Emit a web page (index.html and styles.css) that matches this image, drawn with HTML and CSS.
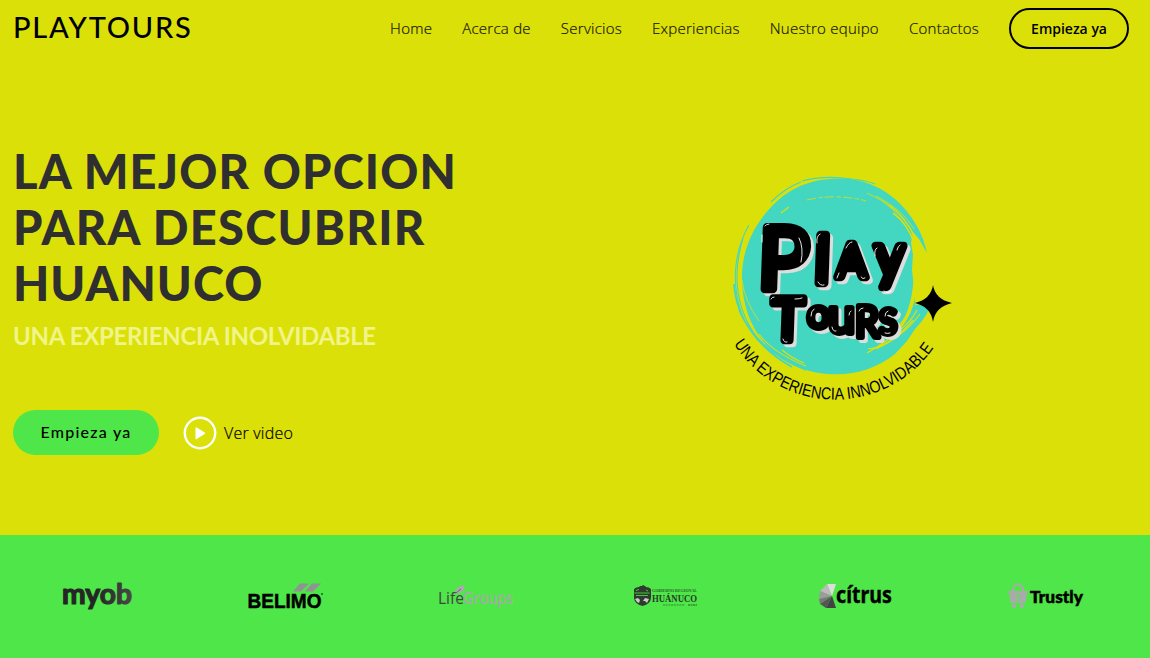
FILE: index.html
```html
<!DOCTYPE html>
<html lang="es">
<head>
<meta charset="utf-8">
<title>PLAYTOURS</title>
<link rel="stylesheet" href="styles.css">
</head>
<body>
<div class="hero">
  <header class="header">
    <a class="brand">PLAYTOURS</a>
    <nav class="nav">
      <a>Home</a><a>Acerca de</a><a>Servicios</a><a>Experiencias</a><a>Nuestro equipo</a><a>Contactos</a>
      <a class="cta">Empieza ya</a>
    </nav>
  </header>
  <main class="main">
    <section class="copy">
      <h1><span class="l1">LA MEJOR OPCION</span><span class="l2">PARA DESCUBRIR</span><span class="l3">HUANUCO</span></h1>
      <h2>UNA EXPERIENCIA INOLVIDABLE</h2>
      <div class="actions">
        <a class="start">Empieza ya</a>
        <a class="video">
          <svg width="34" height="34" viewBox="0 0 34 34"><circle cx="17" cy="17" r="15.2" fill="none" stroke="#fff" stroke-width="2.4"/><path d="M12.500 12v10.400q0 1.300 1.200.6l8-5q1-.8 0-1.500l-8-5q-1.200-.7-1.200.5z" fill="#fff"/></svg>
          <span>Ver video</span>
        </a>
      </div>
    </section>
    <svg class="art" width="240" height="245" viewBox="0 0 240 245">
      <defs>
        <path id="arc" d="M9 178A119.500 119.500 0 0 0 211 178"/>
      </defs>
      <path fill="#43d7c2" d="M17 115C16 82 32 52 58 31C78 17 98 12 125 14C145 17 158 24 170 34C187 49 198 68 202 88L194 74L188 67L186 78L188 89L187 105L189 123L190 140L199 139L205 132L207 136C204 146 199 155 190 164L182 176L170 189C151 204 128 211 103 209C52 205 18 167 17 115Z"/>
      <g fill="none" stroke="#43d7c2">
        <path d="M24 60C8 88 7 120 16 147M18 73C7 110 11 145 33 174" stroke-width="1.100"/>
        <path d="M9 119C11 153 34 184 67 202M14 145C27 175 51 193 81 205" stroke-width="1.700"/>
        <path d="M77 16Q95 11 118 13T150 19M46 37Q60 23 76 17" stroke-width="1.200"/>
      </g>
      <g fill="none" stroke="#dce009">
        <path d="M82 35Q98 31 115 32T141 36" stroke-width=".8" stroke-dasharray="9 3 4 2"/>
        <path d="M142 28Q171 39 187 72M156 35Q179 46 194 80M151 31Q177 44 189 64" stroke-width=".8"/>
        <path d="M164 40Q181 52 191 75M168 48Q183 59 190 80" stroke-width="1.500"/>
        <path d="M188 86Q193 105 190 123Q190 149 169 170M192 145Q183 164 142 188M195 149Q178 172 151 184M188 155Q165 182 143 184" stroke-width="1.200"/>
        <path d="M190 116Q187 151 173 163" stroke-width="3"/>
        <path d="M34 169Q48 188 81 201M57 185Q68 194 79 198M26 58Q18 78 17 91M56 48l8-6" stroke-width="1.100"/>
        <path d="M17 115Q19 135 34 156" stroke-width=".8"/>
      </g>
      <g class="lettering">
        <text transform="translate(32 124) skewX(-2)" font-size="86" textLength="51" lengthAdjust="spacingAndGlyphs">P</text>
        <text transform="translate(89 118) skewX(-2)" font-size="65" textLength="15" lengthAdjust="spacingAndGlyphs">l</text>
        <text x="112" y="112" font-size="46" textLength="29" lengthAdjust="spacingAndGlyphs">A</text>
        <text x="150" y="112" font-size="60" textLength="29" lengthAdjust="spacingAndGlyphs">y</text>
        <text transform="translate(46 175) skewX(-2)" font-size="58" textLength="32" lengthAdjust="spacingAndGlyphs">T</text>
        <g class="small"><text x="82" y="163" font-size="41" textLength="23" lengthAdjust="spacingAndGlyphs">o</text>
        <text x="103" y="168" font-size="48" textLength="27" lengthAdjust="spacingAndGlyphs">u</text>
        <text x="130" y="172" font-size="43" textLength="24" lengthAdjust="spacingAndGlyphs">R</text>
        <text x="154" y="169" font-size="34" textLength="18" lengthAdjust="spacingAndGlyphs">S</text></g>
      </g>
      <path class="shine" d="M37 77V70M40 61Q41 59 44 59M74 73Q79 83 76 97M92 78Q91 71 95 69M93 117Q95 121 99 120M121 83Q124 77 127 77M112 113l2-5M136 112q2 3 4 1M150 91Q149 84 152 83M172 85q1-4 3-5M159 126q3 3 7 0M46 134q1-2 3-2M70 134q5 0 7-1M58 174q1 4 4 3M86 151q0-5 3-7M107 162q1 5 4 4M124 150q0-3 2-4M134 146q1-3 4-3M160 151q0-4 3-5M160 168q3 1 5 0"/>
      <path d="M208 120Q210 134 227 138Q210 142 208 157Q206 142 190 138Q206 134 208 120Z"/>
      <text class="arc-text" transform="translate(0 1)"><textPath href="#arc" textLength="236" lengthAdjust="spacingAndGlyphs">UNA EXPERIENCIA INNOLVIDABLE</textPath></text>
    </svg>
  </main>
</div>
<footer class="partners">
  <svg width="90" height="40" viewBox="0 0 90 40">
    <defs><linearGradient id="fade"><stop offset=".5" stop-color="#252525"/><stop offset="1" stop-color="#484848"/></linearGradient></defs>
    <text x="10" y="28" class="myob" textLength="70" lengthAdjust="spacingAndGlyphs">myob</text>
  </svg>
  <svg width="90" height="40" viewBox="0 0 90 40">
    <path d="M58 7.500h9l-8 8h-8zM70 7.500h9l-8 8h-8z" fill="#929292"/>
    <text x="5.500" y="31.500" class="belimo" textLength="74" lengthAdjust="spacingAndGlyphs">BELIMO</text><circle cx="80" cy="18" r=".8"/>
  </svg>
  <svg width="90" height="40" viewBox="0 0 90 40">
    <path d="M23 17q0-7 10-8-1 8-7 8.500z" fill="#aaa"/><path d="M24 17l5-4" stroke="#555" stroke-width=".8"/>
    <text x="6" y="28" class="life" textLength="26" lengthAdjust="spacingAndGlyphs">Life</text><text x="31" y="28" class="life groups" textLength="50" lengthAdjust="spacingAndGlyphs">Groups</text>
  </svg>
  <svg width="90" height="40" viewBox="0 0 90 40">
    <path d="M12 13q2-2 5-2l1-1h2l1-1 2 1 1 1q3 0 5 2v9q-.5 6-8.500 8-8-2-8.500-8z" fill="#303b30"/>
    <path d="M12.500 17h15M14 19.500h12M14 14.500l3-1M24 14l2 1" stroke="#4ee648" stroke-width=".8"/>
    <path d="M13 23l3-1 2 2-1 3-2-1zM21 25l2-3 4 1-2 4-2-2z" fill="#c8ccc8"/>
    <text x="30" y="15.500" class="gob" textLength="45" lengthAdjust="spacingAndGlyphs">GOBIERNO REGIONAL</text>
    <text x="30" y="26" class="huanuco" textLength="45" lengthAdjust="spacingAndGlyphs">HUÁNUCO</text>
    <path d="M41 29h22" stroke="#2f8f2c" stroke-width="1" stroke-dasharray="2 .7"/><path d="M66 29h9" stroke="#285c27" stroke-width="1.200" stroke-dasharray="2 .5"/>
  </svg>
  <svg width="90" height="40" viewBox="0 0 90 40">
    <path d="M15 8h9l-4 12z" fill="#ddd"/><path d="M15 8l5 12-12-5z" fill="#bbb"/><path d="M8 15l12 5-13 3z" fill="#9b9b9b"/><path d="M7 23l13-3-12 8z" fill="#777"/><path d="M8 28l12-8-6 12z" fill="#555"/><path d="M14 32l6-12 4 12z" fill="#424242"/>
    <text x="24" y="26.500" class="citrus" textLength="56" lengthAdjust="spacingAndGlyphs">cítrus</text>
  </svg>
  <svg width="90" height="40" viewBox="0 0 90 40">
    <path d="M11 16v-3q1-4.500 5-4.500t5 4.500v3" fill="none" stroke="#aaa" stroke-width="2"/>
    <path d="M6 15h20l-1 3-1.500 8q0 1-1 1h-13q-1 0-1-1L7 18z" fill="#aaa"/><circle cx="12" cy="30" r="2.200" fill="#aaa"/><circle cx="20" cy="30" r="2.200" fill="#aaa"/>
    <text x="13.200" y="25" class="tee">T</text>
    <text x="28" y="27" class="trustly" textLength="53" lengthAdjust="spacingAndGlyphs">Trustly</text>
  </svg>
</footer>
</body>
</html>
```
FILE: styles.css
```css
body{margin:0;background:#4ee648;font-family:"Open Sans",sans-serif;color:#000}
.hero{height:535px;background:#dce009}
.header{display:flex;justify-content:space-between;height:57px}
.brand{font:500 29px/53px Lato,sans-serif;letter-spacing:1.8px;padding-left:13px}
.nav{display:flex;gap:30px;align-items:center;padding-right:21px;font-size:15px;font-weight:300;color:#151600;letter-spacing:.255px;-webkit-text-stroke:.2px #151600}
.nav a{padding-bottom:2px}
.nav .cta{border:2px solid #000;border-radius:21px;padding:0 20px;line-height:37px;font-size:14px;font-weight:600;color:#000;letter-spacing:0;-webkit-text-stroke:0}
.main{display:flex;justify-content:space-between;padding:0 185px 0 13px}
.copy{padding-top:86px}
h1{margin:0;font:900 47px/56px Lato,sans-serif;color:#2f2f2f}
h1 span{display:block}
.l1{letter-spacing:1.2px}
.l2{letter-spacing:1.3px}
.l3{letter-spacing:1px}
h2{margin:10px 0 0;font:700 24px/29px Lato,sans-serif;color:#f1f486;letter-spacing:-.33px}
.actions{display:flex;gap:24px;align-items:center;margin-top:60px}
.start{box-sizing:border-box;width:146px;height:45px;border-radius:23px;background:#4ee648;text-align:center;font:500 16px/43px Lato,sans-serif;letter-spacing:1.25px}
.video{display:flex;align-items:center;gap:7px;font-size:16px;font-weight:300;letter-spacing:.22px;-webkit-text-stroke:.2px #000}
.art{margin-top:108px}
.lettering{font-family:Lato,sans-serif;font-weight:400;fill:#000;stroke:#000;stroke-width:8.5;stroke-linejoin:round;filter:drop-shadow(3px 3px 0 #ddd)}
.lettering .small{stroke-width:6}
.shine{fill:none;stroke:#fff;stroke-width:.9;stroke-linecap:round}
.arc-text{font:400 17px "Liberation Sans",sans-serif}
.partners{height:123px;background:#4ee648;box-sizing:border-box;padding:41px 8px 0 2px;display:grid;grid-template-columns:repeat(6,1fr);justify-items:center;align-items:start}
.myob{font:700 29px Lato,sans-serif;fill:url(#fade);stroke:url(#fade);stroke-width:1.2;stroke-linejoin:round}
.belimo{font:700 20px "Liberation Sans",sans-serif;stroke:#000;stroke-width:.5}
.life{font:400 17px "Open Sans",sans-serif;fill:#444}
.groups{fill:#aaa;stroke:#aaa;stroke-width:.3}
.gob{font:700 5px "Liberation Serif",serif;fill:#28642a}
.huanuco{font:700 11px "Liberation Serif",serif;fill:#263b26}
.citrus{font:700 23px "Noto Sans",sans-serif;stroke:#000;stroke-width:.4}
.tee{font:700 8px "Liberation Serif",serif;fill:#4ee648}
.trustly{font:900 17px Lato,sans-serif;stroke:#000;stroke-width:.5}
```
